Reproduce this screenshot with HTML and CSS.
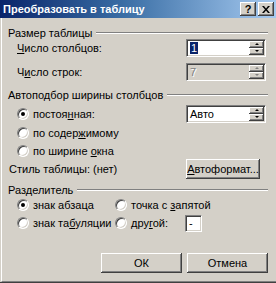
FILE: index.html
```html
<!DOCTYPE html>
<html>
<head>
    <title>Преобразовать в таблицу</title>
    <link rel="stylesheet" href="styles.css">
</head>
<body>
    <div class="window">
        <div class="titlebar">
            <span class="title">Преобразовать в таблицу</span>
            <div class="title-buttons">
                <span class="tbtn help">?</span>
                <span class="tbtn close">
                    <svg width="8" height="7" viewBox="0 0 8 7">
                        <path d="M0 0h2l2 2.5L6 0h2L5 3.5 8 7H6L4 4.5 2 7H0l3-3.5z" fill="#000"/>
                    </svg>
                </span>
            </div>
        </div>

        <div class="frame">
            <div class="group g-size"><span>Размер таблицы</span><i class="rule"></i></div>

            <div class="row spin-row first">
                <span class="label"><u>Ч</u>исло столбцов:</span>
                <div class="spin">
                    <span class="value"><span class="sel">1</span></span>
                    <div class="arrows">
                        <span class="arrow up"></span>
                        <span class="arrow down"></span>
                    </div>
                </div>
            </div>

            <div class="row spin-row second">
                <span class="label">Ч<u>и</u>сло строк:</span>
                <div class="spin disabled">
                    <span class="value">7</span>
                    <div class="arrows">
                        <span class="arrow up"></span>
                        <span class="arrow down"></span>
                    </div>
                </div>
            </div>

            <div class="group g-fit"><span>Автоподбор ширины столбцов</span><i class="rule"></i></div>

            <div class="row radio-row r1">
                <span class="radio checked"><i class="dot"></i></span>
                <span class="rlabel">постоя<u>н</u>ная:</span>
                <div class="spin">
                    <span class="value">Авто</span>
                    <div class="arrows">
                        <span class="arrow up"></span>
                        <span class="arrow down"></span>
                    </div>
                </div>
            </div>
            <div class="row radio-row r2">
                <span class="radio"></span>
                <span class="rlabel">по содер<u>ж</u>имому</span>
            </div>
            <div class="row radio-row r3">
                <span class="radio"></span>
                <span class="rlabel">по ширине <u>о</u>кна</span>
            </div>

            <div class="row style-row">
                <span class="style-label">Стиль таблицы:</span>
                <span class="style-value">(нет)</span>
                <span class="button autoformat"><u>А</u>втоформат...</span>
            </div>

            <div class="group g-sep"><span>Разделитель</span><i class="rule"></i></div>

            <div class="sep-grid">
                <div class="opt"><span class="radio checked"><i class="dot"></i></span><span>знак абзаца</span></div>
                <div class="opt wide"><span class="radio"></span><span>точка с <u>з</u>апятой</span></div>
                <div class="opt"><span class="radio"></span><span>знак та<u>б</u>уляции</span></div>
                <div class="opt"><span class="radio"></span><span>дру<u>г</u>ой:</span></div>
                <div class="char-box">-</div>
            </div>

            <div class="actions">
                <span class="button">ОК</span>
                <span class="button">Отмена</span>
            </div>
        </div>
    </div>
</body>
</html>
```

FILE: styles.css
```css
body {
    margin: 0;
    width: 276px;
    height: 283px;
    overflow: hidden;
    background-color: #d4d0c8;
    font-family: "Liberation Sans", Arial, sans-serif;
    font-size: 11px;
    color: #000;
}

u {
    text-decoration: underline;
    text-underline-offset: 1px;
}

.window {
    width: 276px;
    height: 283px;
    box-sizing: border-box;
    display: flex;
    flex-direction: column;
    border-bottom: 1px solid #404040;
}

.titlebar {
    height: 18px;
    flex: none;
    display: flex;
    align-items: center;
    justify-content: space-between;
    padding: 0 2px 0 3px;
    background: linear-gradient(to right, #0a246a 0%, #3a6ea5 45%, #a6caf0 100%);
}

.title {
    color: #fff;
    font-weight: bold;
    font-size: 11px;
    white-space: nowrap;
}

.title-buttons {
    display: flex;
    gap: 2px;
}

.tbtn {
    width: 16px;
    height: 14px;
    box-sizing: border-box;
    display: flex;
    align-items: center;
    justify-content: center;
    background-color: #d4d0c8;
    box-shadow: inset -1px -1px #404040, inset 1px 1px #fff, inset -2px -2px #808080;
    font-weight: bold;
    font-size: 11px;
    line-height: 1;
}

.frame {
    flex: 1;
    margin-left: 1px;
    border-left: 1px solid #fff;
    border-bottom: 1px solid #808080;
    padding: 0 8px 0 6px;
    display: flex;
    flex-direction: column;
}

/* group headings with the etched line */
.group {
    height: 13px;
    display: flex;
    align-items: center;
    white-space: nowrap;
}

.group .rule {
    flex: 1;
    height: 0;
    margin-left: 4px;
    border-top: 1px solid #808080;
    border-bottom: 1px solid #fff;
}

.g-size { margin-top: 8px; }
.g-fit { margin-top: 7px; }
.g-sep { margin-top: 4px; }

.row {
    display: flex;
    align-items: center;
}

.spin-row {
    height: 18px;
    padding-left: 9px;
}

.spin-row.first { margin-top: 0; }
.spin-row.second { margin-top: 6px; }

.spin {
    margin-left: auto;
    margin-right: 2px;
    width: 80px;
    height: 18px;
    box-sizing: border-box;
    display: flex;
    background-color: #fff;
    border-top: 1px solid #808080;
    border-left: 1px solid #808080;
    border-bottom: 1px solid #fff;
    border-right: 1px solid #fff;
    box-shadow: inset 1px 1px #404040, inset -1px -1px #d4d0c8;
    padding: 1px;
}

.spin .value {
    flex: 1;
    padding-left: 2px;
    line-height: 14px;
}

.spin .sel {
    background-color: #0a246a;
    color: #fff;
    padding: 0 1px;
}

.spin.disabled {
    background-color: #d4d0c8;
}

.spin.disabled .value {
    color: #808080;
    text-shadow: 1px 1px #fff;
}

.arrows {
    width: 15px;
    display: flex;
    flex-direction: column;
}

.arrow {
    flex: 1;
    display: flex;
    align-items: center;
    justify-content: center;
    background-color: #d4d0c8;
    box-shadow: inset -1px -1px #404040, inset 1px 1px #fff, inset -2px -2px #808080;
}

.arrow::after {
    content: "";
    border-left: 2px solid transparent;
    border-right: 2px solid transparent;
}

.arrow.up::after { border-bottom: 2px solid #000; margin-top: -1px; }
.arrow.down::after { border-top: 2px solid #000; margin-top: -1px; }

.spin.disabled .arrow.up::after { border-bottom-color: #808080; }
.spin.disabled .arrow.down::after { border-top-color: #808080; }

/* radio buttons */
.radio {
    position: relative;
    width: 12px;
    height: 12px;
    flex: none;
    box-sizing: border-box;
    border-radius: 50%;
    background-color: #fff;
    border: 1px solid;
    border-color: #808080 #fff #fff #808080;
    box-shadow: inset 1px 1px #404040, inset -1px -1px #d4d0c8;
}

.radio .dot {
    position: absolute;
    left: 3px;
    top: 3px;
    width: 4px;
    height: 4px;
    border-radius: 50%;
    background-color: #000;
}

.radio-row {
    padding-left: 9px;
    gap: 4px;
}

.radio-row.r1 { height: 18px; margin-top: 4px; }
.radio-row.r2 { height: 18px; margin-top: 1px; }
.radio-row.r3 { height: 16px; margin-top: 1px; }

.style-row {
    height: 20px;
    padding-left: 1px;
}

.style-value {
    margin-left: 3px;
}

.button {
    width: 81px;
    height: 20px;
    box-sizing: border-box;
    display: flex;
    align-items: center;
    justify-content: center;
    background-color: #d4d0c8;
    box-shadow: inset -1px -1px #404040, inset 1px 1px #fff, inset -2px -2px #808080;
}

.autoformat {
    width: 74px;
    margin-left: auto;
    margin-right: 8px;
}

.sep-grid {
    display: grid;
    grid-template-columns: 98px 70px 17px;
    grid-template-rows: 14px 18px;
    row-gap: 2px;
    margin-top: 2px;
    padding-left: 9px;
    align-items: center;
}

.opt {
    display: flex;
    align-items: center;
    gap: 4px;
    white-space: nowrap;
}

.opt.wide {
    grid-column: 2 / 4;
}

.char-box {
    width: 17px;
    height: 17px;
    box-sizing: border-box;
    background-color: #fff;
    border-top: 1px solid #808080;
    border-left: 1px solid #808080;
    border-bottom: 1px solid #fff;
    border-right: 1px solid #fff;
    box-shadow: inset 1px 1px #404040, inset -1px -1px #d4d0c8;
    padding-left: 3px;
    line-height: 14px;
}

.actions {
    display: flex;
    justify-content: flex-end;
    gap: 5px;
    margin-top: 21px;
}
```
